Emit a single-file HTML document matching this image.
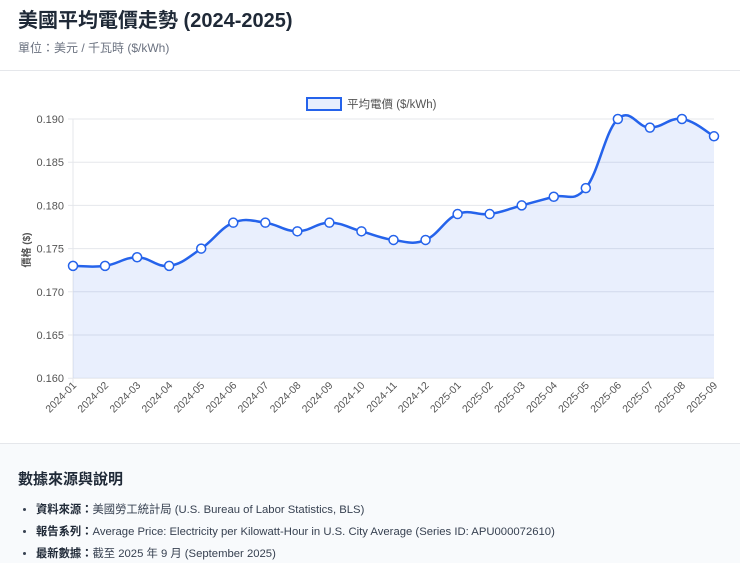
<!DOCTYPE html>
<html><head><meta charset="utf-8"><style>
body{margin:0;width:740px;height:563px;overflow:hidden;background:#fff;font-family:"Liberation Sans","Noto Sans CJK TC",sans-serif;}
.h{height:71px;border-bottom:1px solid #e5e7eb;box-sizing:border-box;padding:9px 0 0 18px}
h1{margin:0;font-size:20px;font-weight:700;color:#1f2937;line-height:24px}
.sub{font-size:12px;color:#6b7280;margin-top:6px}
.foot{position:absolute;top:443px;left:0;width:740px;height:120px;background:#f8fafc;border-top:1px solid #e5e7eb;padding:24px 0 0 18px;box-sizing:border-box}
h2{margin:0 0 14px;font-size:15px;color:#1f2937;font-weight:700}
ul{margin:0;padding:0 0 0 18px;font-size:11.3px;color:#374151}
li{margin-bottom:8px;line-height:14px}
b{color:#1f2937}
</style></head><body>
<div class="h"><h1>美國平均電價走勢 (2024-2025)</h1><div class="sub">單位：美元 / 千瓦時 ($/kWh)</div></div>
<svg id="c" width="740" height="372" style="position:absolute;top:71px;left:0" font-family="Liberation Sans, Noto Sans CJK TC, sans-serif"></svg>
<div class="foot"><h2>數據來源與說明</h2><ul>
<li><b>資料來源：</b>美國勞工統計局 (U.S. Bureau of Labor Statistics, BLS)</li>
<li><b>報告系列：</b>Average Price: Electricity per Kilowatt-Hour in U.S. City Average (Series ID: APU000072610)</li>
<li><b>最新數據：</b>截至 2025 年 9 月 (September 2025)</li></ul></div>
<script>
var v=[173,173,174,173,175,178,178,177,178,177,176,176,179,179,180,181,182,190,189,190,188];
var oy=-71,s='';
function Y(a){return 119+(190-a)*8.64+oy}
function X(i){return 73+i*32.05}
for(var k=0;k<7;k++){var y=119+k*43.2+oy;s+='<line x1="68" x2="714" y1="'+y+'" y2="'+y+'" stroke="#e5e7eb"/><text x="64" y="'+(y+4)+'" font-size="11" fill="#555" text-anchor="end">0.'+(190-5*k)+'</text>';}
s+='<line x1="73" x2="73" y1="'+(119+oy)+'" y2="'+(383+oy)+'" stroke="#e5e7eb"/>';
var p=[];for(var i=0;i<21;i++)p.push([X(i),Y(v[i])]);
var d='M'+p[0][0]+','+p[0][1];
for(var i=0;i<20;i++){var p0=p[i-1]||p[i],p1=p[i],p2=p[i+1],p3=p[i+2]||p2,t=0.4/2;
d+=' C'+(p1[0]+(p2[0]-p0[0])*t)+','+(p1[1]+(p2[1]-p0[1])*t)+' '+(p2[0]-(p3[0]-p1[0])*t)+','+(p2[1]-(p3[1]-p1[1])*t)+' '+p2[0]+','+p2[1];}
s+='<path d="'+d+' L714,'+(378+oy)+' L73,'+(378+oy)+'Z" fill="rgba(37,99,235,0.1)"/>';
s+='<path d="'+d+'" fill="none" stroke="#2563eb" stroke-width="2.5"/>';
p.forEach(function(q){s+='<circle cx="'+q[0]+'" cy="'+q[1]+'" r="4.5" fill="#fff" stroke="#2563eb" stroke-width="1.5"/>'});
var m=['01','02','03','04','05','06','07','08','09','10','11','12'];
for(var i=0;i<21;i++){var lab=(i<12?'2024-'+m[i]:'2025-'+m[i-12]);var x=X(i)+4,y=386+oy;
s+='<text transform="translate('+x+','+y+') rotate(-45)" font-size="10.5" fill="#555" text-anchor="end">'+lab+'</text>';}
s+='<text transform="translate(30,'+(250+oy)+') rotate(-90)" font-size="10" font-weight="bold" fill="#555" text-anchor="middle">價格 ($)</text>';
s+='<rect x="307" y="'+(98+oy)+'" width="34" height="12" fill="#e8effd" stroke="#2563eb" stroke-width="2"/><text x="347" y="'+(108+oy)+'" font-size="11.5" fill="#555">平均電價 ($/kWh)</text>';
document.getElementById('c').innerHTML=s;
</script>
</body></html>
